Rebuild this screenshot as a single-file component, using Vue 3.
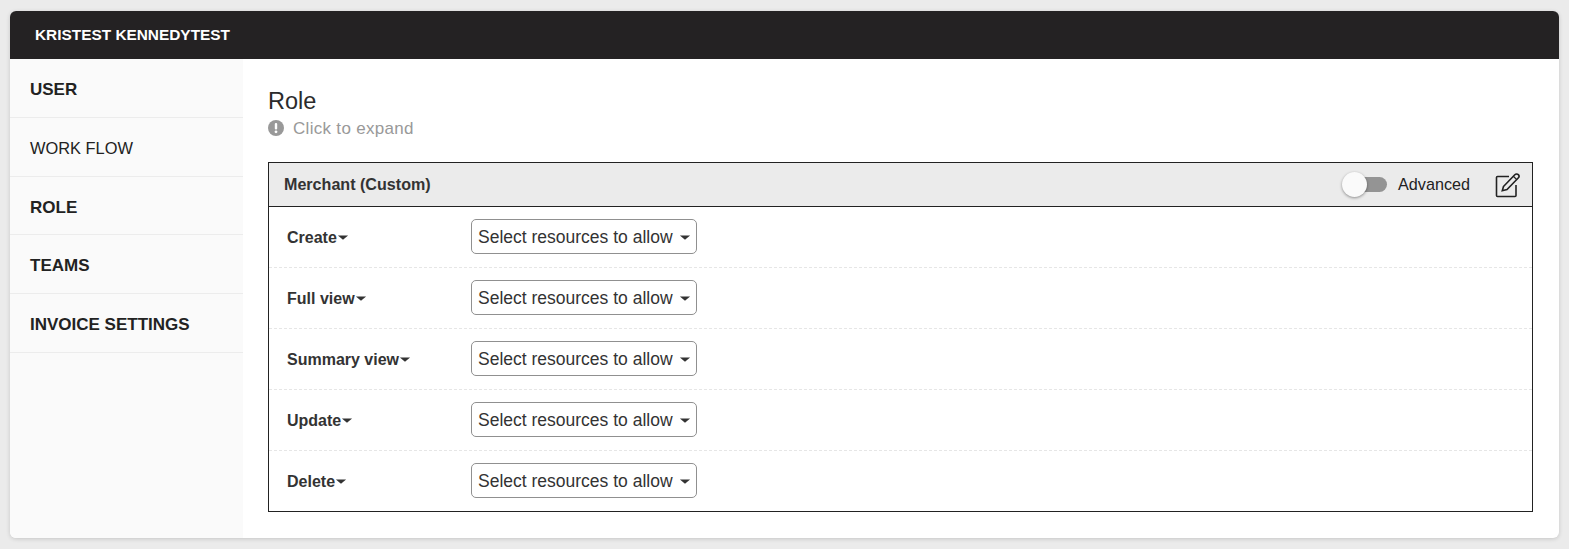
<script setup>
const navItems = [
  { label: 'USER', bold: true },
  { label: 'WORK FLOW', bold: false },
  { label: 'ROLE', bold: true },
  { label: 'TEAMS', bold: true },
  { label: 'INVOICE SETTINGS', bold: true },
]
const rows = ['Create', 'Full view', 'Summary view', 'Update', 'Delete']
</script>

<template>
  <div class="page">
    <div class="card">
      <header class="topbar">KRISTEST KENNEDYTEST</header>
      <div class="body">
        <aside class="sidebar">
          <div v-for="item in navItems" :key="item.label" class="nav-item" :class="{ bold: item.bold }">{{ item.label }}</div>
        </aside>
        <main class="content">
          <h1 class="title">Role</h1>
          <div class="hint">
            <svg class="hint-icon" width="16" height="16" viewBox="0 0 16 16">
              <circle cx="8" cy="8" r="8" fill="#999" />
              <rect x="6.8" y="3" width="2.4" height="6.5" rx="1" fill="#fff" />
              <circle cx="8" cy="11.8" r="1.4" fill="#fff" />
            </svg>
            <span>Click to expand</span>
          </div>
          <section class="panel">
            <div class="panel-head">
              <span class="panel-title">Merchant (Custom)</span>
              <div class="panel-tools">
                <span class="switch"><span class="knob"></span></span>
                <span class="adv">Advanced</span>
                <svg class="edit" width="26" height="26" viewBox="0 0 26 26" fill="none" stroke="#222" stroke-width="1.6">
                  <path d="M14 4.500H2.500a1 1 0 0 0-1 1V23.500a1 1 0 0 0 1 1H20a1 1 0 0 0 1-1V13" />
                  <path d="M8.500 14.500L19.800 2.800c1-1 2.500-1.200 3.500-.2s.9 2.400-.1 3.400L12 17.500l-4.700 1.200z" />
                  <path d="M18.300 4.300l3.600 3.500" stroke-width="1.200" />
                </svg>
              </div>
            </div>
            <div v-for="row in rows" :key="row" class="row">
              <div class="row-label">
                <span>{{ row }}</span><span class="caret small"></span>
              </div>
              <button class="select" type="button">
                <span>Select resources to allow</span><span class="caret"></span>
              </button>
            </div>
          </section>
        </main>
      </div>
    </div>
  </div>
</template>

<style>
html, body { margin: 0; background: #ebebeb; }
</style>

<style scoped>
.page {
  width: 1569px;
  height: 549px;
  box-sizing: border-box;
  padding: 11px 10px;
  font-family: "Liberation Sans", Arial, sans-serif;
  overflow: hidden;
}
.card {
  height: 527px;
  display: flex;
  flex-direction: column;
  border-radius: 6px;
  overflow: hidden;
  background: #fff;
  box-shadow: 0 1px 4px rgba(0, 0, 0, 0.16);
}
.topbar {
  height: 48px;
  flex: none;
  background: #242223;
  color: #fff;
  font-size: 15.4px;
  font-weight: 700;
  line-height: 48px;
  padding-left: 25px;
}
.body { flex: 1; display: flex; min-height: 0; }
.sidebar { width: 233px; flex: none; background: #fafafa; }
.nav-item {
  height: 58.75px;
  box-sizing: border-box;
  border-bottom: 1px solid #ececec;
  padding-left: 20px;
  font-size: 17px;
  line-height: 62px;
  color: #222;
}
.nav-item:not(.bold) { font-size: 16.4px; line-height: 60px; }
.nav-item.bold { font-weight: 700; }
.content { flex: 1; padding: 29px 26px 0 25px; color: #222; }
.title {
  margin: 0;
  font-size: 23.5px;
  font-weight: 400;
  line-height: 26px;
  color: #2b2b2b;
}
.hint {
  display: flex;
  align-items: center;
  gap: 9px;
  height: 20px;
  margin-top: 5px;
  color: #999;
  font-size: 17px;
  letter-spacing: 0.3px;
}
.hint-icon { margin-top: -3px; }
.panel { margin-top: 23px; border: 1px solid #222; height: 350px; box-sizing: border-box; }
.panel-head {
  height: 43px;
  background: #ebebeb;
  border-bottom: 1px solid #222;
  display: flex;
  align-items: center;
  justify-content: space-between;
  padding: 0 11px 0 15px;
}
.panel-title { font-size: 16.1px; font-weight: 700; color: #333; }
.panel-tools { display: flex; align-items: center; }
.switch {
  position: relative;
  width: 34px;
  height: 15px;
  border-radius: 8px;
  background: #949494;
  margin-right: 11px;
}
.knob {
  position: absolute;
  left: -11px;
  top: -5px;
  width: 25px;
  height: 25px;
  border-radius: 50%;
  background: #fafafa;
  box-shadow: 0 1px 3px rgba(0, 0, 0, 0.4);
}
.adv { font-size: 16.2px; color: #222; margin-right: 25px; }
.row {
  height: 61px;
  box-sizing: border-box;
  padding: 12px 0 0 18px;
  display: flex;
  border-bottom: 1px dashed #e6e6e6;
  align-items: flex-start;
}
.row:last-child { border-bottom: none; }
.row-label {
  width: 184px;
  flex: none;
  display: flex;
  align-items: center;
  height: 35px;
  padding-top: 2px;
  box-sizing: border-box;
  font-size: 16px;
  font-weight: 700;
  color: #333;
}
.select {
  width: 226px;
  height: 35px;
  box-sizing: border-box;
  border: 1px solid #909090;
  border-radius: 5px;
  background: #fff;
  padding: 1px 6px 0;
  display: flex;
  align-items: center;
  font: 17.5px "Liberation Sans", Arial, sans-serif;
  color: #333;
  white-space: nowrap;
}
.caret {
  display: inline-block;
  width: 0;
  height: 0;
  margin-left: 6px;
  border-left: 6px solid transparent;
  border-right: 6px solid transparent;
  border-top: 5px solid #333;
  transform: scale(0.85);
}
.caret.small { margin-left: 0; margin-top: -1px; }
</style>
